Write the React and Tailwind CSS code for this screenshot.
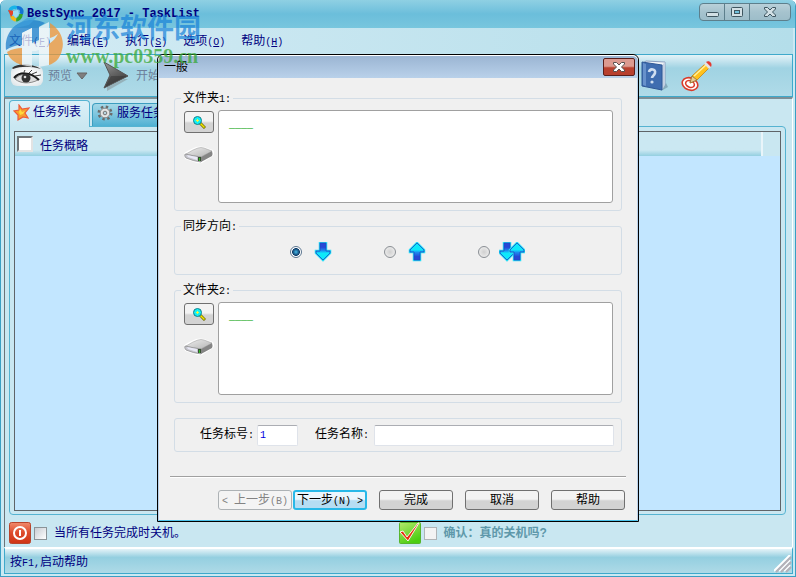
import React from "react";

const Mono = ({ children }) => (
  <span className="font-['Liberation_Mono',monospace] text-[10px]">{children}</span>
);

const menus = [
  ["文件", "F"],
  ["编辑", "E"],
  ["执行", "S"],
  ["选项", "O"],
  ["帮助", "H"],
];

function AppLogo() {
  return (
    <svg width="18" height="18" viewBox="0 0 18 18" fill="none" strokeWidth="3.5" aria-hidden="true">
      <path d="M3 7C3 3 7 1 10 3" stroke="#18b4e8" />
      <path d="M10 3c4-1 6 3 4 6" stroke="#1273d6" />
      <path d="M14 9c0 3-2 5-5 6" stroke="#35a52c" />
      <path d="M9 15c-3-1-4-2-4-4" stroke="#f0b91c" />
      <path d="M1 5l7 1-4 6z" fill="#e8432a" />
      <path d="M6 6l5-1 1 4-3 4-3-3z" fill="#9bdcf2" />
    </svg>
  );
}

function EyeIcon() {
  return (
    <svg width="33" height="24" viewBox="0 0 33 24" aria-hidden="true">
      <defs>
        <radialGradient id="skin" cx="50%" cy="50%" r="60%">
          <stop offset="0.5" stopColor="#fafafa" />
          <stop offset="1" stopColor="#dfe6e9" />
        </radialGradient>
      </defs>
      <rect x="0" y="2" width="32" height="20" rx="6" fill="url(#skin)" />
      <path d="M1 4C7-1 20-1 30 5 20 2 10 2 2 5z" fill="#333" />
      <path d="M4 15C9 9 19 8 27 16 19 20 10 20 4 15z" fill="#ddd" stroke="#888" />
      <path d="M3 14C8 8 19 7 28 16" fill="none" stroke="#1b1b1b" strokeWidth="2" />
      <circle cx="15" cy="14" r="4.5" fill="#333" />
      <circle cx="14" cy="13" r="1.3" fill="#ddd" />
      <path d="M21 10l5-2M24 12l6-1M18 9l3-3M13 8l1-2" stroke="#444" />
    </svg>
  );
}

function PlayIcon() {
  return (
    <svg width="28" height="30" viewBox="0 0 28 30" aria-hidden="true">
      <defs>
        <linearGradient id="play" x1="0" y1="0" x2="0.5" y2="1">
          <stop offset="0" stopColor="#9a9a9a" />
          <stop offset="0.5" stopColor="#666" />
          <stop offset="1" stopColor="#3a3a3a" />
        </linearGradient>
      </defs>
      <path d="M5 30l21-12-4 0-17 8z" fill="#777" opacity="0.4" />
      <path d="M2 1L26 15 2 27 8 14z" fill="url(#play)" stroke="#555" />
      <path d="M3 26L9 15 25 15z" fill="#333" opacity="0.5" />
    </svg>
  );
}

function BookIcon() {
  return (
    <svg width="28" height="32" viewBox="0 0 28 32" aria-hidden="true">
      <path d="M20 31l7-4-2-4z" fill="#6d8ea0" opacity="0.6" />
      <path d="M2 3l3-2 19 1v23l-3 4z" fill="#f0f4f8" stroke="#8a9fc0" />
      <path d="M21 5l3-3v23l-3 5z" fill="#c3d0e2" />
      <path d="M1 2l20 3v25L1 26z" fill="#3f6db0" stroke="#2f5896" />
      <path d="M2 3l3 1v22l-3-1z" fill="#6791cb" />
      <path d="M8 12c1-4 7-3 6 1-1 3-3 3-3 5" fill="none" stroke="#cfdef0" strokeWidth="2.6" />
      <circle cx="11" cy="22" r="1.6" fill="#cfdef0" />
    </svg>
  );
}

function PencilIcon() {
  return (
    <svg width="32" height="32" viewBox="0 0 32 32" aria-hidden="true">
      <g transform="rotate(22 9 24)" fill="none">
        <ellipse cx="9" cy="24" rx="8" ry="6" fill="#fff" stroke="#da3b2a" strokeWidth="1.6" />
        <ellipse cx="9" cy="24" rx="4.5" ry="3.2" stroke="#da3b2a" strokeWidth="1.6" />
      </g>
      <path d="M9 23l2-7L24 4l4 4-12 12z" fill="#ffc21d" stroke="#c68412" strokeWidth="0.8" />
      <path d="M13 16L25 5" stroke="#fff0a0" strokeWidth="1.5" />
      <path d="M9 23l2-7 5 4z" fill="#eccb93" stroke="#8f6e39" strokeWidth="0.8" />
      <path d="M23 4l2-2 5 5-2 2z" fill="#e4e4e4" />
      <path d="M25 2c3-2 7 1 5 5z" fill="#e43a31" />
    </svg>
  );
}

function StarIcon() {
  return (
    <svg width="17" height="17" viewBox="0 0 17 17" aria-hidden="true">
      <path
        d="M6 1l3 4 7-1-4 5 3 5-5-1-5 3 0-5-4-4 5-1z"
        fill="#f6a02c"
        stroke="#ef5a3a"
        strokeWidth="1.2"
      />
      <path d="M7 5l2 3 3-1-2 3-3 1-1-3z" fill="#ffd93b" />
    </svg>
  );
}

function GearIcon() {
  return (
    <svg width="16" height="16" viewBox="0 0 16 16" aria-hidden="true">
      <circle cx="8" cy="8" r="6.2" fill="none" stroke="#6c6c6c" strokeWidth="2.6" strokeDasharray="2.4 2.47" />
      <circle cx="8" cy="8" r="4.8" fill="#e4e4e4" stroke="#8a8a8a" />
      <circle cx="8" cy="8" r="1.8" fill="#b9d5df" stroke="#777" />
    </svg>
  );
}

function PowerIcon() {
  return (
    <svg width="22" height="22" viewBox="0 0 22 22" aria-hidden="true">
      <defs>
        <linearGradient id="power" x1="0" y1="0" x2="0" y2="1">
          <stop offset="0" stopColor="#f08a6c" />
          <stop offset="0.5" stopColor="#dd4a2b" />
          <stop offset="1" stopColor="#cf3415" />
        </linearGradient>
      </defs>
      <rect x="0.5" y="0.5" width="21" height="21" rx="2" fill="url(#power)" stroke="#b8442c" />
      <circle cx="11" cy="11" r="6" fill="none" stroke="#fff" strokeWidth="2" />
      <path d="M11 8v6" stroke="#fff" strokeWidth="2" />
    </svg>
  );
}

function CheckIcon() {
  return (
    <svg width="22" height="22" viewBox="0 0 22 22" aria-hidden="true">
      <defs>
        <linearGradient id="confirm" x1="0" y1="0" x2="0.5" y2="1">
          <stop offset="0" stopColor="#b5e86c" />
          <stop offset="1" stopColor="#4bce12" />
        </linearGradient>
      </defs>
      <rect x="0.5" y="0.5" width="21" height="21" rx="1" fill="url(#confirm)" stroke="#56b52c" />
      <path d="M1 10l3-1 4 6L19 1l1 0L9 19z" fill="#e8300e" stroke="#fff" strokeWidth="0.9" />
    </svg>
  );
}

function MagnifierIcon() {
  return (
    <svg width="14" height="14" viewBox="0 0 14 14" aria-hidden="true">
      <path d="M8 8l5 5" stroke="#6f6a00" strokeWidth="3" />
      <path d="M8 8l4.500 4.500" stroke="#f2e600" strokeWidth="1.500" />
      <circle cx="5.500" cy="5.500" r="4" fill="#12f0f5" stroke="#12808c" />
      <path d="M4 5.500h3M5.500 4v3" stroke="#f6f53a" />
    </svg>
  );
}

function DriveIcon() {
  return (
    <svg width="30" height="18" viewBox="0 0 30 18" aria-hidden="true">
      <defs>
        <linearGradient id="drive" x1="0" y1="0" x2="1" y2="1">
          <stop offset="0" stopColor="#ededed" />
          <stop offset="1" stopColor="#b4b4b4" />
        </linearGradient>
      </defs>
      <path d="M0 8Q0 6 12 1q4-1 8 0l9 3q2 3 0 6L18 17q-4 1-8-1L1 13z" fill="#fff" />
      <path d="M2 8Q10 3 14 2q3-1 6 0l8 3-11 6Q9 10 2 8z" fill="url(#drive)" stroke="#999" strokeWidth="0.5" />
      <path d="M1 8q8 2 16 3v5q-8-1-15-4-2-2-1-4z" fill="#c6c6ce" stroke="#888" strokeWidth="0.7" />
      <path d="M17 11l11-6q1 3 0 5L17 16z" fill="#858585" />
      <path d="M3 9l10 2v3L4 11z" fill="#e9e9f6" />
      <path d="M14 11h3v4h-3z" fill="#34502f" />
      <path d="M15 12h1v3h-1z" fill="#35b52c" />
    </svg>
  );
}

const DOWN = "M5 1h6v8h4v2l-7 7-7-7V9h4z";
const UP = "M5 18h6v-8h4V8L8 1 1 8v2h4z";

function DirectionIcon({ shapes, width, viewBox }) {
  return (
    <svg width={width} height="20" viewBox={viewBox} aria-hidden="true">
      <defs>
        <linearGradient id="dirDown" x1="0" y1="0" x2="0" y2="1">
          <stop offset="0.25" stopColor="#2748d6" />
          <stop offset="0.45" stopColor="#1c8df0" />
          <stop offset="0.6" stopColor="#0ee9fa" />
        </linearGradient>
        <linearGradient id="dirUp" x1="0" y1="1" x2="0" y2="0">
          <stop offset="0.2" stopColor="#2748d6" />
          <stop offset="0.45" stopColor="#1c8df0" />
          <stop offset="0.6" stopColor="#0ee9fa" />
        </linearGradient>
      </defs>
      {shapes.map(([kind, x]) => (
        <g key={kind} transform={`translate(${x} 0)`}>
          <path d={kind === "down" ? DOWN : UP} fill="none" stroke="#25dcf5" strokeWidth="2.500" />
          <path
            d={kind === "down" ? DOWN : UP}
            fill={kind === "down" ? "url(#dirDown)" : "url(#dirUp)"}
            stroke="#1c49c4"
            strokeWidth="0.8"
          />
        </g>
      ))}
    </svg>
  );
}

function TitleBar() {
  const cap =
    "flex h-[18px] items-center justify-center border border-[#5d7f8c] bg-linear-to-b from-[#b9d0d9] via-[#a6c3ce] to-[#9dbdc9] text-[#3f5660]";
  return (
    <header className="flex h-7 items-start justify-between bg-linear-to-b from-[#8fd0e3] via-[#6bbedb] to-[#78c6de] pr-1 pl-[6px]">
      <div className="flex h-7 items-center gap-0.5">
        <AppLogo />
        <h1 className="font-['Liberation_Mono',monospace] text-[12px] font-bold whitespace-nowrap text-[#000080]">
          BestSync 2017 - TaskList
        </h1>
      </div>
      <div className="mt-[3px] flex">
        <button aria-label="最小化" className={`${cap} w-[26px] rounded-l-sm`}>
          <svg width="13" height="12" viewBox="0 0 13 12">
            <rect x="0.500" y="6.500" width="12" height="4" rx="1" fill="#d2e0e5" stroke="currentColor" />
          </svg>
        </button>
        <button aria-label="最大化" className={`${cap} -ml-px w-[26px]`}>
          <svg width="12" height="10" viewBox="0 0 12 10">
            <rect x="0.500" y="0.500" width="11" height="9" rx="1" fill="#d2e0e5" stroke="currentColor" />
            <rect x="3.500" y="3.500" width="5" height="3" fill="#6fc0dc" stroke="currentColor" />
          </svg>
        </button>
        <button aria-label="关闭" className={`${cap} -ml-px w-[42px] rounded-r-sm`}>
          <svg width="12" height="10" viewBox="0 0 12 10">
            <path d="M0.500 0.500h3L6 3 8.500.500h3v1.500L8.500 5l3 3v1.500h-3L6 7 3.500 9.500h-3V8l3-3-3-3z" fill="#d2e0e5" stroke="currentColor" />
          </svg>
        </button>
      </div>
    </header>
  );
}

function Toolbar() {
  return (
    <div className="flex h-[43px] items-center border border-[#3fa9cb] bg-linear-to-b from-[#e4f3f8] from-0% via-[#a0d3e3] via-32% to-[#b0dbe8] pr-[79px] pl-[6px] text-[#6c7f9a]">
      <button className="flex items-center gap-1">
        <EyeIcon />
        <span>预览</span>
        <svg width="12" height="8" viewBox="0 0 12 8" aria-hidden="true">
          <path d="M1 1h10L6 7z" fill="#7f7f7f" stroke="#666" />
        </svg>
      </button>
      <button className="ml-[14px] flex items-center gap-1.5">
        <PlayIcon />
        <span>开始</span>
      </button>
      <div className="ml-auto flex items-center gap-3">
        <button aria-label="帮助"><BookIcon /></button>
        <button aria-label="设置"><PencilIcon /></button>
      </div>
    </div>
  );
}

function TaskPanel() {
  return (
    <main className="flex flex-1 flex-col border-t-2 border-r border-l border-t-[#7d8f96] border-r-white border-l-[#6b7378] bg-[#c9e7f1] pt-px pr-1.5 pl-1">
      <div role="tablist" className="flex items-end gap-0.5">
        <button
          role="tab"
          aria-selected="true"
          className="relative -mb-px flex h-[27px] w-[81px] items-center gap-[3px] rounded-t-sm border border-b-0 border-[#55b3d1] bg-linear-to-b from-[#dcf0f7] to-[#c9e7f1] pb-1 pl-[3px]"
        >
          <StarIcon />
          任务列表
        </button>
        <button
          role="tab"
          aria-selected="false"
          className="flex h-[23px] w-[81px] items-center gap-1 rounded-t-sm border border-b-0 border-[#3c9dbf] bg-linear-to-b from-[#a4d8e8] to-[#4fb1d3] pb-1 pl-1"
        >
          <GearIcon />
          服务任务
        </button>
      </div>
      <section className="flex flex-1 flex-col rounded-b-sm rounded-tr-sm border border-[#55b3d1] p-1 pb-[3px]">
        <div className="flex flex-1 flex-col border border-[#5f6468] bg-[#c2e6ff]">
          <table className="w-full border-collapse text-left">
            <thead>
              <tr className="h-6">
                <th className="border-r-2 border-[#e9f5fa] bg-linear-to-b from-[#cbe8f2] from-75% to-[#93cfe0] p-0 font-normal">
                  <label className="flex items-center gap-[7px] pl-0.5">
                    <input
                      type="checkbox"
                      className="size-4 appearance-none border-2 border-t-[#6f7579] border-r-[#e3e3e3] border-b-[#e3e3e3] border-l-[#6f7579] bg-white"
                    />
                    <span className="pt-1">任务概略</span>
                  </label>
                </th>
                <th aria-label="空列" className="w-[18px] bg-[#c9e7f1] p-0" />
              </tr>
            </thead>
          </table>
        </div>
      </section>
      <div className="grid h-8 grid-cols-2 items-center pt-1">
        <label className="flex items-center gap-[3px]">
          <PowerIcon />
          <input
            type="checkbox"
            className="size-[13px] appearance-none border border-[#8b9397] bg-linear-to-br from-[#c8ccd2] to-white"
          />
          <span className="ml-1">当所有任务完成时关机。</span>
        </label>
        <label className="flex items-center gap-[3px] pl-px font-bold text-[#5e98aa]">
          <CheckIcon />
          <input
            type="checkbox"
            disabled
            className="size-[13px] appearance-none border border-[#b0b4b6] bg-[#f3f3f3]"
          />
          <span className="ml-1">确认：真的关机吗?</span>
        </label>
      </div>
    </main>
  );
}

function StatusBar() {
  return (
    <footer className="mb-0.5 flex h-[27px] items-center justify-between border border-t-2 border-[#3fa9cb] border-t-white bg-linear-to-b from-[#e4f3f8] from-0% via-[#94cfe0] via-35% to-[#aedae7] pl-[5px]">
      <span className="pt-1">
        按<Mono>F1,</Mono>启动帮助
      </span>
      <svg width="18" height="18" viewBox="0 0 18 18" className="self-end" aria-hidden="true">
        <path d="M0 16L16 0M5 16L16 5M10 16l6-6" stroke="#fff" strokeWidth="2" />
        <path d="M2 17L17 2M7 17L17 7M12 17l5-5" stroke="#b5b1b8" strokeWidth="2" />
      </svg>
    </footer>
  );
}

function Group({ title, children }) {
  return (
    <fieldset className="rounded-[3px] border border-[#d3dde6]">
      <legend className="ml-1.5 h-4 px-0.5 leading-4">{title}</legend>
      {children}
    </fieldset>
  );
}

function FolderGroup({ number }) {
  return (
    <Group title={<>文件夹<Mono>{number}:</Mono></>}>
      <div className="flex gap-1 pt-1 pr-2 pb-[7px] pl-[9px]">
        <div className="flex flex-col items-center gap-[13px] pt-px">
          <button
            aria-label={`浏览文件夹${number}`}
            className="flex h-[22px] w-[30px] items-center justify-center rounded-[3px] border border-[#707070] bg-linear-to-b from-[#f3f3f3] from-45% to-[#d3d3d3] to-55%"
          >
            <MagnifierIcon />
          </button>
          <DriveIcon />
        </div>
        <textarea
          aria-label={`文件夹${number}`}
          defaultValue="____"
          spellCheck={false}
          className="block h-[93px] min-w-0 flex-1 resize-none rounded-[3px] border border-[#a0a0a0] bg-white px-2.5 py-[7px] font-['Liberation_Mono',monospace] text-[10px] leading-4 font-bold text-[#00a000] outline-none"
        />
      </div>
    </Group>
  );
}

const directions = [
  { id: "down", label: "文件夹1到文件夹2", width: 24, viewBox: "-4 0 24 20", shapes: [["down", 0]] },
  { id: "up", label: "文件夹2到文件夹1", width: 24, viewBox: "-4 0 24 20", shapes: [["up", 0]] },
  { id: "both", label: "双向", width: 26, viewBox: "0 0 26 20", shapes: [["down", 0], ["up", 10]] },
];

const field =
  "h-[21px] rounded-xs border border-[#dfe3ea] border-t-[#abadb3] bg-white font-['Liberation_Mono',monospace] text-[10px] text-[#0000e0] outline-none";
const push =
  "h-5 w-[74px] rounded-[3px] border border-[#707070] bg-linear-to-b from-[#f3f3f3] from-45% to-[#d3d3d3] to-55% whitespace-nowrap text-black leading-[18px]";

function Dialog() {
  return (
    <div
      role="dialog"
      aria-labelledby="dialog-title"
      className="w-[482px] rounded-t-md border border-black bg-[#f0f0f0] text-black"
    >
      <div className="flex h-[23px] items-center justify-between rounded-t-md border-t border-white bg-linear-to-b from-[#9bb5d3] to-[#b9d1ea] pr-[3px] pl-1.5">
        <h2 id="dialog-title">一般</h2>
        <button
          aria-label="关闭"
          className="flex h-[18px] w-8 items-center justify-center rounded-xs border border-[#5a1f1c] bg-linear-to-b from-[#dc9a90] from-45% to-[#b8402e] to-55%"
        >
          <svg width="12" height="10" viewBox="0 0 12 10">
            <path d="M0.500 0.500h3L6 3 8.500.500h3v1.500L8.500 5l3 3v1.500h-3L6 7 3.500 9.500h-3V8l3-3-3-3z" fill="#fff" stroke="#57504f" />
          </svg>
        </button>
      </div>
      <form
        onSubmit={(e) => e.preventDefault()}
        className="border-x border-b border-[#b9d1ea] border-b-[#4dc3ea] px-[15px] pt-3 pb-2.5"
      >
        <div className="flex flex-col gap-[7px]">
          <FolderGroup number={1} />
          <Group title={<>同步方向<Mono>:</Mono></>}>
            <div className="flex h-10 items-center gap-[49px] pb-1 pl-[115px]">
              {directions.map((d) => (
                <label key={d.id} className="flex items-center gap-[9px]">
                  <input
                    type="radio"
                    name="direction"
                    aria-label={d.label}
                    defaultChecked={d.id === "down"}
                    className="size-3 appearance-none rounded-full border border-[#8a8f94] bg-radial from-[#d0d0d0] to-[#f4f4f4] checked:border-[#5c7690] checked:bg-radial checked:from-[#3aa0d0] checked:from-10% checked:via-[#123f6b] checked:via-50% checked:to-white checked:to-60%"
                  />
                  <DirectionIcon shapes={d.shapes} width={d.width} viewBox={d.viewBox} />
                </label>
              ))}
            </div>
          </Group>
          <FolderGroup number={2} />
        </div>
        <div className="mt-[15px] flex h-[34px] items-center rounded-[3px] border border-[#d3dde6] pr-[7px] pl-[25px]">
          <label htmlFor="task-id">任务标号<Mono>:</Mono></label>
          <input id="task-id" defaultValue="1" className={`${field} ml-[3px] w-[41px] px-0.5`} />
          <label htmlFor="task-name" className="ml-[17px]">任务名称<Mono>:</Mono></label>
          <input id="task-name" className={`${field} ml-[5px] min-w-0 flex-1 px-0.5`} />
        </div>
        <hr className="-mx-1 mt-6 h-0.5 border-t border-b border-t-[#a0a0a0] border-b-white" />
        <div className="-mr-[3px] mt-3 flex justify-end">
          <button disabled className="h-5 w-[74px] rounded-[3px] border border-[#adb2b5] bg-[#f4f4f4] leading-[18px] whitespace-nowrap text-[#838383]">
            <Mono>&lt; </Mono>上一步<Mono>(B)</Mono>
          </button>
          <button className="ml-px h-5 w-[74px] rounded-[3px] border-2 border-[#28b8e8] bg-linear-to-b from-[#eaf6fd] from-45% to-[#b5ddf3] to-55% leading-4 whitespace-nowrap text-black">
            下一步<Mono>(N) &gt;</Mono>
          </button>
          <button className={`${push} ml-3`}>完成</button>
          <button className={`${push} ml-3`}>取消</button>
          <button className={`${push} ml-3`}>帮助</button>
        </div>
      </form>
    </div>
  );
}

function Watermark() {
  return (
    <div className="pointer-events-none absolute top-4 left-1 flex items-start gap-[3px]">
      <svg width="58" height="52" viewBox="0 0 58 52" opacity="0.75" aria-hidden="true">
        <path d="M1 34C-1 16 12 4 27 4c5 0 9 1 13 3l-6 4v13l-7 3V12l-10 5v12C11 29 5 31 1 34z" fill="#1f7fcb" />
        <path d="M6 13L22 2 32 1 24 9z" fill="#2d93dc" opacity="0.7" />
        <path d="M45 7c10 6 15 17 12 27-2 9-7 13-13 15V28c4-3 7-6 9-10-3 2-5 3-8 4z" fill="#ef9433" />
        <path d="M2 36c5-3 10-4 15-4v17C9 47 4 42 2 36z" fill="#ef9433" />
        <path d="M17 17l10-5v16c3 0 5-1 7-2V11l10-5v43l-10 2V34c-2 1-5 1-7 1v16l-10-2z" fill="#f2f7f9" />
      </svg>
      <div className="whitespace-nowrap">
        <div className="text-[27px] leading-[26px] font-bold text-[#1681d8]/70">河东软件园</div>
        <div className="font-['Liberation_Serif',serif] text-[20px] leading-7 font-bold text-[#38a838]/75">
          www.pc0359.cn
        </div>
      </div>
    </div>
  );
}

export default function App() {
  return (
    <div className="relative flex min-h-screen flex-col overflow-hidden rounded-t-md border-x border-b border-[#3a9fc3] bg-[#cbe9f3] font-['Liberation_Sans','Noto_Sans_CJK_SC',sans-serif] text-[12px] leading-4 text-[#000080]">
      <TitleBar />
      <div className="flex flex-1 flex-col pr-0.5 pl-[3px]">
        <nav className="flex h-[26px] items-center gap-4 bg-linear-to-r from-[#d3ebf4] to-[#b4deea] pt-0.5 pl-[5px]">
          {menus.map(([name, key]) => (
            <button key={key} className="whitespace-nowrap">
              {name}
              <Mono>
                (<u>{key}</u>)
              </Mono>
            </button>
          ))}
        </nav>
        <Toolbar />
        <TaskPanel />
        <StatusBar />
      </div>
      <div className="absolute inset-x-0 top-[54px] flex justify-center">
        <Dialog />
      </div>
      <Watermark />
    </div>
  );
}
